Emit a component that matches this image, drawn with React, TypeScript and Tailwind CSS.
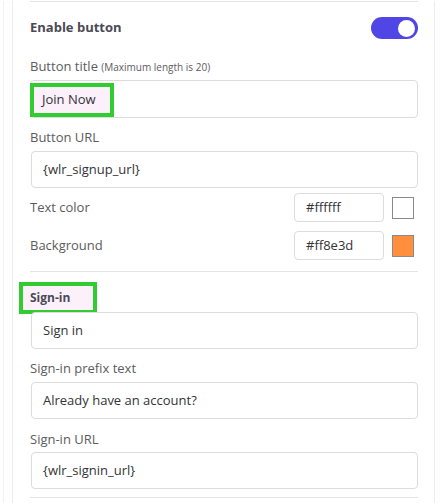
import React from "react";

const font = { fontFamily: '"Open Sans", "Noto Sans", sans-serif' };

function Label({ children }: { children: React.ReactNode }) {
  return <div className="h-[18px] leading-[18px] text-[13px] text-[#5b5b60]">{children}</div>;
}

function Input({ value, h = "h-[38px]" }: { value: string; h?: string }) {
  return (
    <div className={`${h} w-full rounded-[4px] border border-[#dcdcdf] bg-white flex items-center pl-[11px] text-[13px] text-[#333338]`}>
      {value}
    </div>
  );
}

function ColorRow({ label, value, swatch }: { label: string; value: string; swatch: string }) {
  return (
    <div className="flex items-center h-[29px]">
      <div className="flex-1 text-[13px] text-[#5b5b60]">{label}</div>
      <div className="w-[90px] h-[29px] rounded-[4px] border border-[#dcdcdf] flex items-center pl-[11px] text-[13px] text-[#333338]">
        {value}
      </div>
      <div className="w-[22px] h-[22px] ml-[8px] mr-[4px] border border-[#8a8a8a]" style={{ backgroundColor: swatch }} />
    </div>
  );
}

export default function App() {
  return (
    <div className="w-[448px] h-[503px] bg-white overflow-hidden" style={font}>
      <div className="ml-[3px] h-full border-l border-[#f1f1f5] pl-[8px]">
        <div className="w-[423px] h-full border-l border-r border-[#ebebf0] pl-[17px] pr-[16px]">
          <div className="mt-[1px] h-[1px] bg-[#e4e4e8]" />
          <div className="mt-[15px] h-[22px] flex items-center">
            <div className="flex-1 text-[13px] font-bold text-[#4a4a55]">Enable button</div>
            <div className="w-[47px] h-[22px] rounded-full bg-[#4f46e5] flex items-center justify-end pr-[3px]">
              <div className="w-[17px] h-[17px] rounded-full bg-white" />
            </div>
          </div>
          <div className="mt-[18px]">
            <Label>
              Button title <span className="text-[10px]">(Maximum length is 20)</span>
            </Label>
          </div>
          <div className="mt-[5px] relative">
            <div className="h-[38px] w-full rounded-[4px] border border-[#dcdcdf] bg-white" />
            <div className="absolute left-0 top-[3px] w-[84px] h-[34px] border-[4px] border-[#31cc2f] bg-[#fcf0fb] flex items-center pl-[8px] text-[13px] text-[#333338]">
              Join Now
            </div>
          </div>
          <div className="mt-[10px]">
            <Label>Button URL</Label>
          </div>
          <div className="mt-[5px] ml-[1px]">
            <Input value="{wlr_signup_url}" h="h-[37px]" />
          </div>
          <div className="mt-[5px]">
            <ColorRow label="Text color" value="#ffffff" swatch="#ffffff" />
          </div>
          <div className="mt-[9px]">
            <ColorRow label="Background" value="#ff8e3d" swatch="#ff8e3d" />
          </div>
          <div className="mt-[11px] h-[1px] bg-[#e4e4e8]" />
          <div className="mt-[10px] ml-[-11px] w-[78px] h-[32px] border-[4px] border-[#31cc2f] bg-[#fcf0fb] flex items-center pl-[7px] text-[12px] font-bold text-[#4a4a55]">
            Sign-in
          </div>
          <div className="mt-[-2px] ml-[1px]">
            <Input value="Sign in" h="h-[37px]" />
          </div>
          <div className="mt-[10px]">
            <Label>Sign-in prefix text</Label>
          </div>
          <div className="mt-[5px] ml-[1px]">
            <Input value="Already have an account?" h="h-[37px]" />
          </div>
          <div className="mt-[11px]">
            <Label>Sign-in URL</Label>
          </div>
          <div className="mt-[4px] ml-[1px]">
            <Input value="{wlr_signin_url}" h="h-[37px]" />
          </div>
          <div className="mt-[8px] h-[1px] bg-[#e4e4e8]" />
        </div>
      </div>
    </div>
  );
}
